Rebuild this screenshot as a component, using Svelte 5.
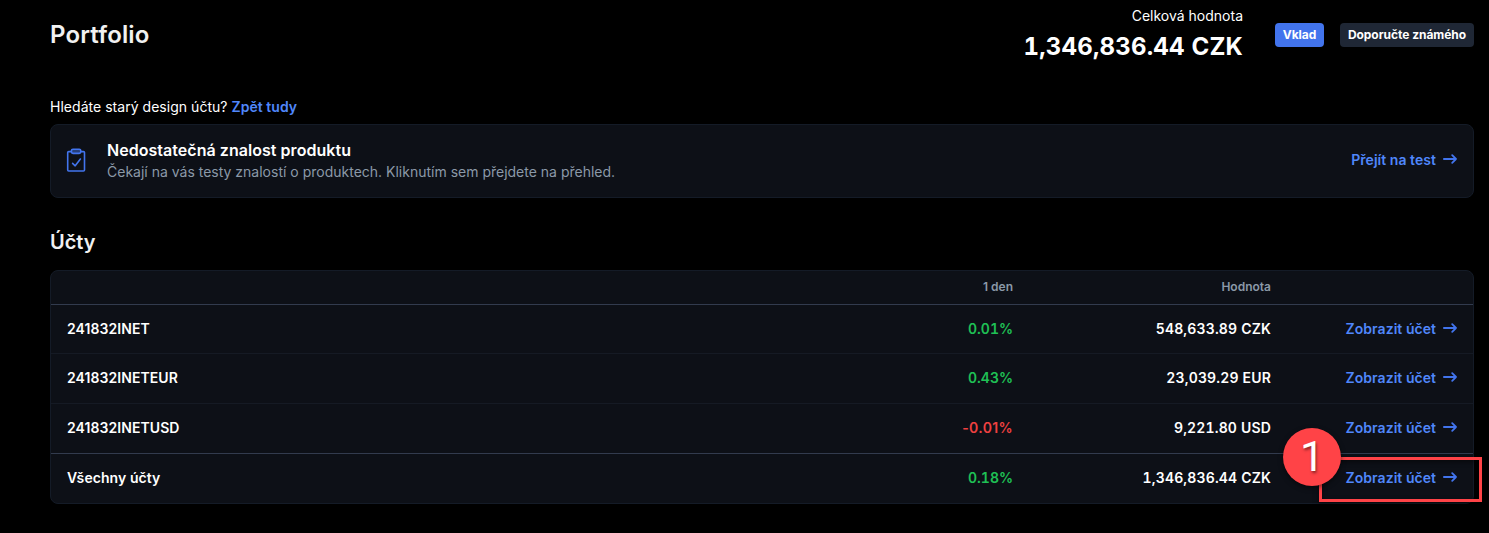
<script>
    const accounts = [
        { name: '241832INET', change: '0.01%', value: '548,633.89 CZK' },
        { name: '241832INETEUR', change: '0.43%', value: '23,039.29 EUR' },
        { name: '241832INETUSD', change: '-0.01%', value: '9,221.80 USD' },
        { name: 'Všechny účty', change: '0.18%', value: '1,346,836.44 CZK', total: true }
    ];
</script>

{#snippet arrow()}
    <svg class="arrow" viewBox="0 0 14 10" width="14" height="10">
        <path d="M0.9 5H13M9.2 1.2L13 5L9.2 8.8" />
    </svg>
{/snippet}

<main class="page">
    <header class="header">
        <h1>Portfolio</h1>
        <div class="total">
            <p class="total__label">Celková hodnota</p>
            <p class="total__value">1,346,836.44 CZK</p>
        </div>
        <div class="actions">
            <button class="button button--primary">Vklad</button>
            <button class="button button--invite">Doporučte známého</button>
        </div>
    </header>

    <p class="old-design">Hledáte starý design účtu? <a href="#old">Zpět tudy</a></p>

    <section class="notice">
        <svg class="notice__icon" viewBox="0 0 20 24" width="20" height="24">
            <rect x="1.7" y="3.6" width="16.8" height="19.4" rx="1" />
            <rect class="clip" x="5.4" y="1.2" width="9.4" height="4.2" rx="1.6" />
            <path d="M6.6 15.4L9.2 17.8L14.4 11" />
        </svg>
        <div class="notice__text">
            <h3>Nedostatečná znalost produktu</h3>
            <p>Čekají na vás testy znalostí o produktech. Kliknutím sem přejdete na přehled.</p>
        </div>
        <a class="link" href="#test">Přejít na test{@render arrow()}</a>
    </section>

    <h2>Účty</h2>
    <section class="table">
        <div class="row row--head">
            <span></span>
            <span class="right">1 den</span>
            <span class="right">Hodnota</span>
            <span></span>
        </div>
        {#each accounts as account}
            <div class="row" class:row--total={account.total}>
                <span class="name">{account.name}</span>
                <span class="right change" class:change--down={account.change.startsWith('-')}>{account.change}</span>
                <span class="right value">{account.value}</span>
                <a class="link" href="#account">Zobrazit účet{@render arrow()}</a>
            </div>
        {/each}
    </section>

    <div class="highlight"></div>
    <div class="step">1</div>
</main>

<style>
    :global(body) {
        background: #000;
    }

    .page {
        position: relative;
        box-sizing: border-box;
        height: 533px;
        padding: 0 15px 0 50px;
        overflow: hidden;
        background: #000;
        color: #fff;
        font-family: Inter, "Liberation Sans", sans-serif;
        font-size: 14px;
    }

    h1, h2, h3, p {
        margin: 0;
    }

    a {
        color: #5087fb;
        font-weight: 600;
        letter-spacing: 0.04px;
        text-decoration: none;
    }

    .header {
        display: flex;
        align-items: center;
        height: 69px;
    }

    h1 {
        flex: 1;
        color: #f1f1f1;
        font-size: 24px;
        font-weight: 600;
        letter-spacing: 0.15px;
        line-height: 32px;
    }

    .total {
        margin-right: 32px;
        text-align: right;
    }

    .total__label {
        height: 21px;
        line-height: 18px;
    }

    .total__value {
        padding-top: 3px;
        font-size: 24px;
        font-weight: 650;
        font-variant-numeric: tabular-nums;
        letter-spacing: 0.2px;
        line-height: 32px;
    }

    .actions {
        display: flex;
        gap: 16px;
    }

    .button {
        height: 24px;
        padding: 0;
        border: 0;
        border-radius: 4px;
        color: #fff;
        font-family: inherit;
        font-size: 12px;
        font-weight: 650;
        letter-spacing: -0.04px;
        line-height: 24px;
    }

    .button--primary {
        width: 49px;
        background: #4274ed;
    }

    .button--invite {
        width: 134px;
        background: #1f2735;
    }

    .old-design {
        margin-top: 28px;
        letter-spacing: 0.03px;
        line-height: 20px;
    }

    .notice {
        display: flex;
        align-items: center;
        box-sizing: border-box;
        height: 74px;
        margin-top: 7px;
        padding: 0 16px 2px 15px;
        border: 1px solid #141b27;
        border-radius: 8px;
        background: #0d1017;
    }

    .notice__icon {
        margin-right: 21px;
        fill: none;
        stroke: #4274ed;
        stroke-width: 1.6;
        stroke-linecap: round;
        stroke-linejoin: round;
    }

    .clip {
        fill: #263f7c;
    }

    .notice__text {
        flex: 1;
    }

    h3 {
        font-size: 16px;
        font-weight: 600;
        letter-spacing: 0.04px;
        line-height: 24px;
    }

    .notice__text p {
        color: #8b99a8;
        line-height: 20px;
    }

    .link {
        display: flex;
        justify-content: flex-end;
        align-items: center;
        gap: 7px;
    }

    .notice .link {
        padding-bottom: 1px;
    }

    .arrow {
        margin-bottom: 2px;
        fill: none;
        stroke: #4274ed;
        stroke-width: 1.8;
        stroke-linecap: round;
        stroke-linejoin: round;
    }

    .notice .arrow {
        margin-bottom: 1px;
    }

    h2 {
        margin-top: 30px;
        color: #f1f1f1;
        font-size: 20px;
        font-weight: 600;
        line-height: 28px;
    }

    .table {
        margin-top: 14px;
        border: 1px solid #141b27;
        border-radius: 8px;
        background: #0d1017;
        font-weight: 600;
    }

    .row {
        display: grid;
        grid-template-columns: 1fr 200px 258px 186px;
        align-items: center;
        box-sizing: border-box;
        height: 50px;
        padding: 0 16px 1px;
        border-top: 1px solid #151a24;
        line-height: 18px;
    }

    .row--head {
        height: 33px;
        padding-bottom: 2px;
        border-top: 0;
        color: #8b99a8;
        font-size: 12px;
    }

    .row--head + .row {
        height: 49px;
        padding-bottom: 0;
        border-top-color: #323b4e;
    }

    .row--total {
        border-top-color: #323b4e;
    }

    .name {
        letter-spacing: 0.07px;
    }

    .right {
        text-align: right;
    }

    .change,
    .value {
        font-variant-numeric: tabular-nums;
        font-weight: 640;
    }

    .value {
        letter-spacing: 0.16px;
    }

    .change {
        color: #1fc055;
    }

    .change--down {
        color: #ee4040;
        font-variant-numeric: normal;
        letter-spacing: 0.35px;
    }

    .highlight {
        position: absolute;
        top: 457px;
        left: 1319px;
        box-sizing: border-box;
        width: 163px;
        height: 45px;
        border: 3px solid #ff4347;
        box-shadow: 0 2px 5px rgba(0, 0, 0, 0.5), inset 0 2px 5px rgba(0, 0, 0, 0.5);
    }

    .step {
        position: absolute;
        top: 428px;
        left: 1283px;
        width: 58px;
        height: 58px;
        border-radius: 50%;
        background: #ff4347;
        box-shadow: 0 2px 5px rgba(0, 0, 0, 0.5);
        font-family: Roboto, sans-serif;
        font-size: 43px;
        line-height: 56px;
        text-align: center;
        text-shadow: 1px 2px 3px rgba(0, 0, 0, 0.5);
    }
</style>
